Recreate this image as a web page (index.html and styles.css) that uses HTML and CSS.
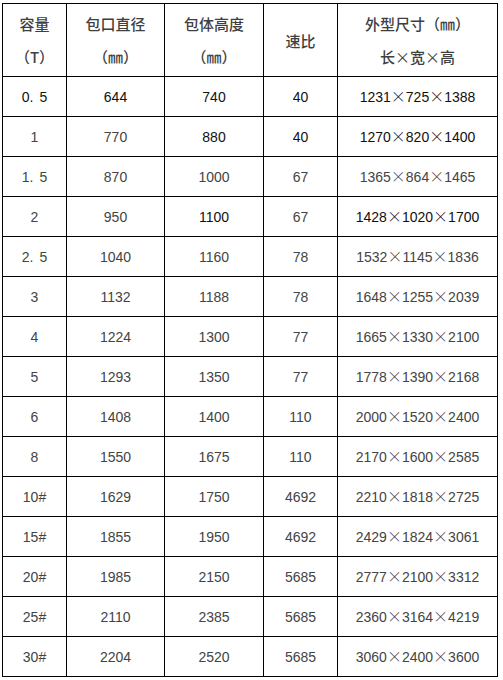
FILE: index.html
```html
<!DOCTYPE html>
<html lang="zh">
<head>
<meta charset="utf-8">
<link rel="stylesheet" href="styles.css">
</head>
<body>
<table class="spec">
<colgroup>
<col class="c1"><col class="c2"><col class="c3"><col class="c4"><col class="c5">
</colgroup>
<thead>
<tr>
<th><span class="l">容量</span><span class="l">（T）</span></th>
<th><span class="l">包口直径</span><span class="l">（㎜）</span></th>
<th><span class="l">包体高度</span><span class="l">（㎜）</span></th>
<th><span class="l">速比</span></th>
<th><span class="l">外型尺寸（㎜）</span><span class="l">长<span class="hx">×</span>宽<span class="hx">×</span>高</span></th>
</tr>
</thead>
<tbody>
<tr class="dark"><td>0<span class="dot">.</span>5</td><td>644</td><td>740</td><td>40</td><td>1231<span class="x">×</span>725<span class="x">×</span>1388</td></tr>
<tr><td>1</td><td>770</td><td class="k">880</td><td class="k">40</td><td class="k">1270<span class="x">×</span>820<span class="x">×</span>1400</td></tr>
<tr><td>1<span class="dot">.</span>5</td><td>870</td><td>1000</td><td>67</td><td>1365<span class="x">×</span>864<span class="x">×</span>1465</td></tr>
<tr><td>2</td><td>950</td><td class="k">1100</td><td>67</td><td class="k">1428<span class="x">×</span>1020<span class="x">×</span>1700</td></tr>
<tr><td>2<span class="dot">.</span>5</td><td>1040</td><td>1160</td><td>78</td><td>1532<span class="x">×</span>1145<span class="x">×</span>1836</td></tr>
<tr><td>3</td><td>1132</td><td>1188</td><td>78</td><td>1648<span class="x">×</span>1255<span class="x">×</span>2039</td></tr>
<tr><td>4</td><td>1224</td><td>1300</td><td>77</td><td>1665<span class="x">×</span>1330<span class="x">×</span>2100</td></tr>
<tr><td>5</td><td>1293</td><td>1350</td><td>77</td><td>1778<span class="x">×</span>1390<span class="x">×</span>2168</td></tr>
<tr><td>6</td><td>1408</td><td>1400</td><td>110</td><td>2000<span class="x">×</span>1520<span class="x">×</span>2400</td></tr>
<tr><td>8</td><td>1550</td><td>1675</td><td>110</td><td>2170<span class="x">×</span>1600<span class="x">×</span>2585</td></tr>
<tr><td>10#</td><td>1629</td><td>1750</td><td>4692</td><td>2210<span class="x">×</span>1818<span class="x">×</span>2725</td></tr>
<tr><td>15#</td><td>1855</td><td>1950</td><td>4692</td><td>2429<span class="x">×</span>1824<span class="x">×</span>3061</td></tr>
<tr><td>20#</td><td>1985</td><td>2150</td><td>5685</td><td>2777<span class="x">×</span>2100<span class="x">×</span>3312</td></tr>
<tr><td>25#</td><td>2110</td><td>2385</td><td>5685</td><td>2360<span class="x">×</span>3164<span class="x">×</span>4219</td></tr>
<tr><td>30#</td><td>2204</td><td>2520</td><td>5685</td><td>3060<span class="x">×</span>2400<span class="x">×</span>3600</td></tr>
</tbody>
</table>
</body>
</html>
```
FILE: styles.css
```css
html, body {
  margin: 0;
  padding: 0;
  background: #ffffff;
}
.spec {
  margin: 3px 0 0 2px;
  border-collapse: collapse;
  table-layout: fixed;
  width: 495px;
  font-family: "Liberation Sans", Arial, "Noto Sans CJK SC", sans-serif;
  font-size: 14px;
  color: #444;
}
.c1 { width: 64px; }
.c2 { width: 98px; }
.c3 { width: 99px; }
.c4 { width: 74px; }
.c5 { width: 160px; }
.spec th,
.spec td {
  border: 1px solid #000;
  text-align: center;
  vertical-align: middle;
  padding: 0;
}
.spec th {
  height: 72px;
  font-family: "Noto Sans CJK SC", sans-serif;
  font-weight: 500;
  font-size: 15px;
  color: #3f3f3f;
  line-height: 33px;
}
.spec th .l {
  display: block;
}
.spec td {
  height: 39px;
}
.dark td,
.spec td.k {
  color: #111;
}
.dot {
  display: inline-block;
  width: 10px;
  text-align: left;
}
.x,
.hx {
  font-family: "Noto Sans CJK SC", sans-serif;
  font-weight: 300;
  font-size: 15px;
  line-height: 14px;
}
.hx {
  font-weight: 400;
}
```
